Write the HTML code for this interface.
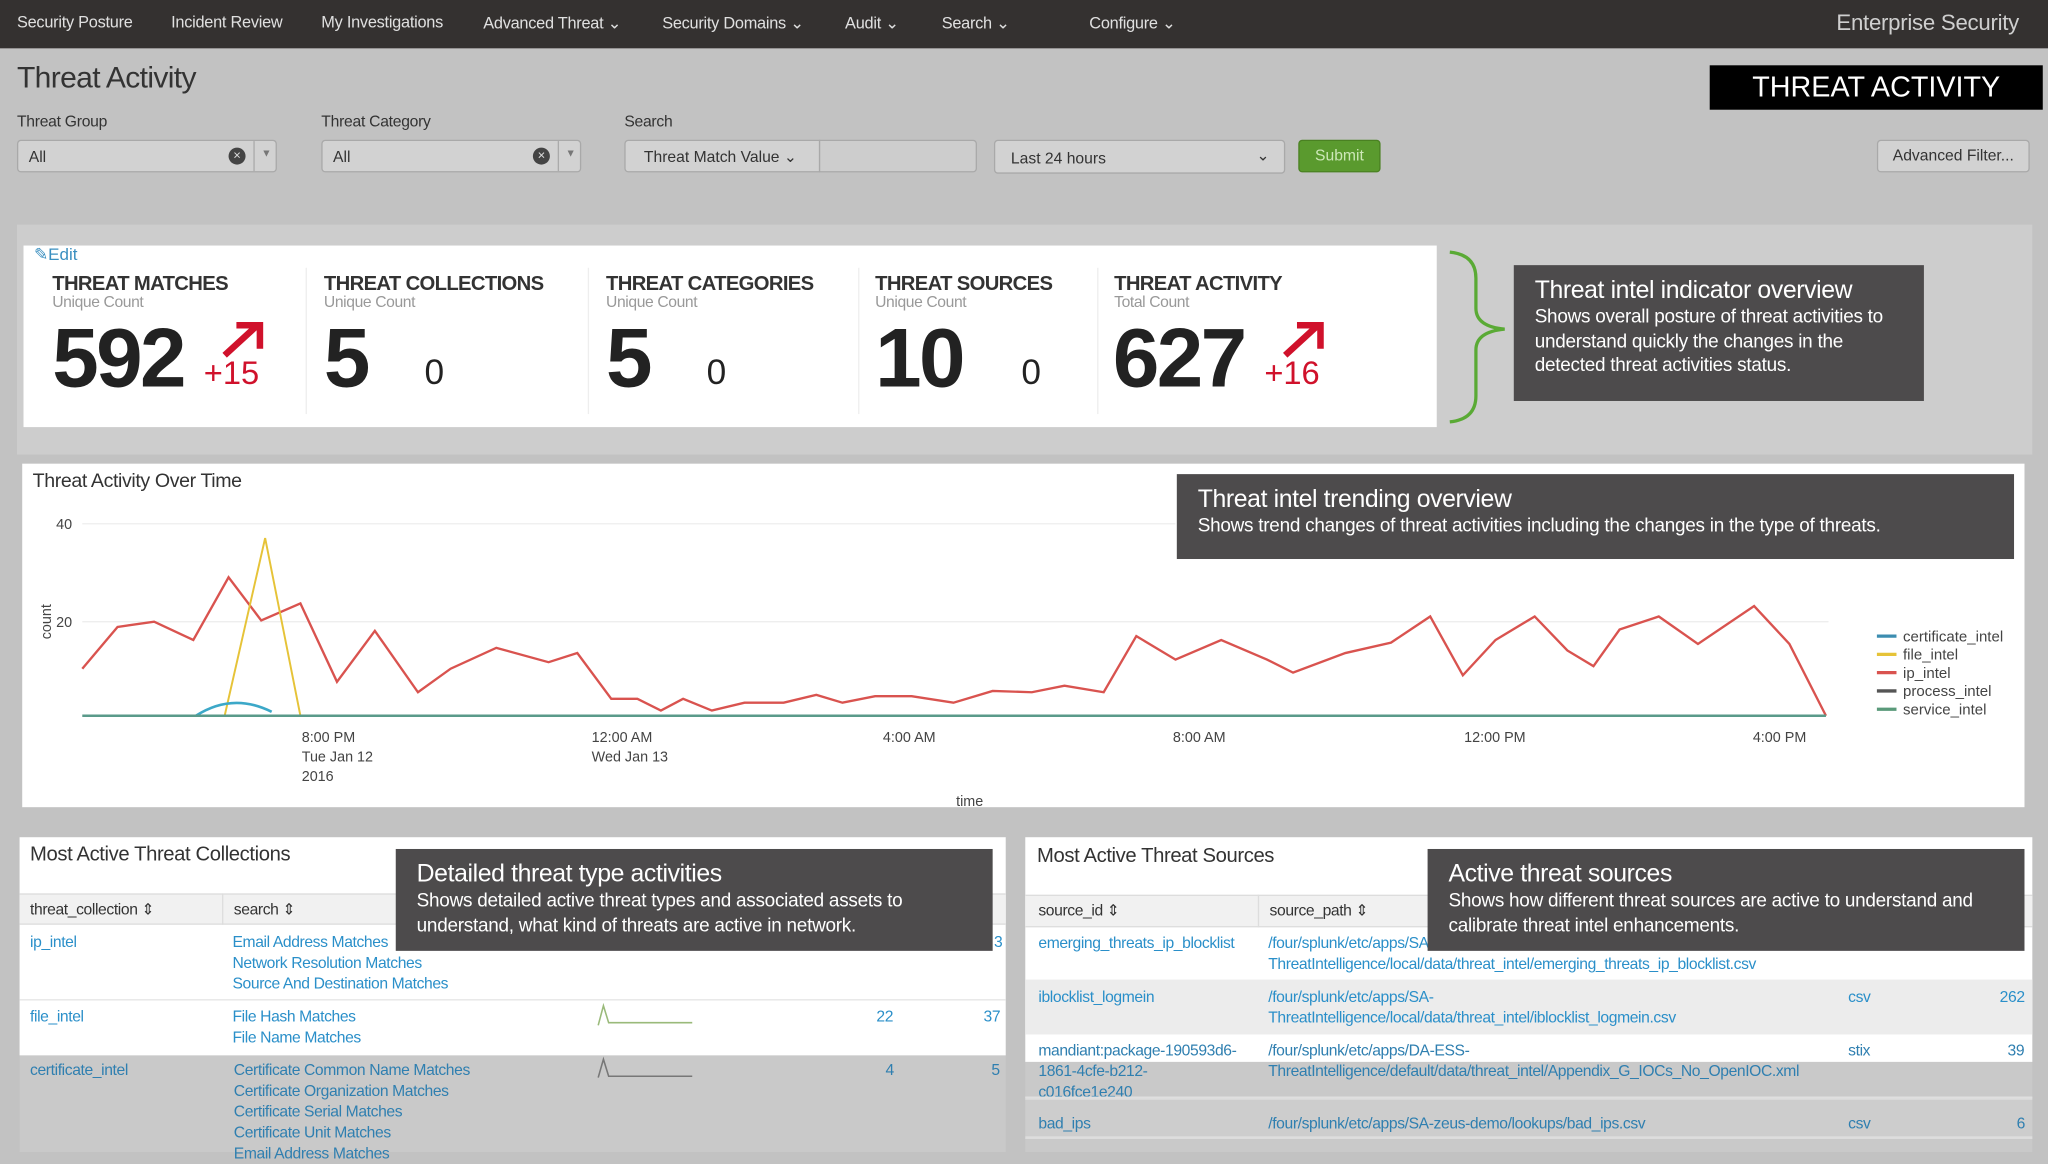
<!DOCTYPE html>
<html><head><meta charset="utf-8"><style>
*{margin:0;padding:0;box-sizing:border-box}
html,body{width:2048px;height:1152px;overflow:hidden;background:#c2c2c2}
#w{position:absolute;left:0;top:0;width:1568px;height:882px;transform:scale(1.30612);transform-origin:0 0;font-family:"Liberation Sans",sans-serif;background:#c2c2c2;color:#333}
.a{position:absolute}
.nav{left:0;top:0;width:1568px;height:37px;background:#343130}
.nav span{position:absolute;top:10px;font-size:12.5px;color:#e0e0e0;letter-spacing:-.2px}
.lbl{font-size:12px;color:#333;letter-spacing:-.2px}
.inp{background:#d2d2d2;border:1px solid #a9a9a9;border-radius:3px;font-size:12px;color:#333}
.card{background:#fff}
.t{font-size:15.5px;font-weight:bold;color:#333;letter-spacing:-.5px}
.u{font-size:12px;color:#999;letter-spacing:-.3px}
.big{font-size:64px;font-weight:bold;color:#222;letter-spacing:-2px}
.sm{font-size:27px;color:#222}
.red{font-size:25px;color:#d0112b}
.co{background:#4d4b4c;color:#fff;z-index:2}
.co h{display:block;font-size:19px;letter-spacing:-.3px}
.co p{font-size:14.5px;line-height:18.5px;letter-spacing:-.2px}
.lk{color:#2a8fc9;font-size:12px;letter-spacing:-.3px;line-height:16px}
.th{font-size:12px;color:#333;letter-spacing:-.3px}
svg.a{z-index:1}
</style></head><body><div id="w">
<div class="a nav">
<span style="left:13px">Security Posture</span>
<span style="left:131px">Incident Review</span>
<span style="left:246px">My Investigations</span>
<span style="left:370px">Advanced Threat ⌄</span>
<span style="left:507px">Security Domains ⌄</span>
<span style="left:647px">Audit ⌄</span>
<span style="left:721px">Search ⌄</span>
<span style="left:834px">Configure ⌄</span>
<span style="left:1406px;top:8px;font-size:17px;color:#cfcfcf">Enterprise Security</span>
</div>
<div class="a" style="left:13px;top:46px;font-size:23px;color:#333;letter-spacing:-.5px">Threat Activity</div>
<div class="a" style="left:1309px;top:50px;width:255px;height:34px;background:#000;color:#fff;font-size:22px;text-align:center;line-height:34px">THREAT ACTIVITY</div>

<div class="a lbl" style="left:13px;top:86px">Threat Group</div>
<div class="a lbl" style="left:246px;top:86px">Threat Category</div>
<div class="a lbl" style="left:478px;top:86px">Search</div>
<div class="a inp" style="left:13px;top:107px;width:199px;height:25px;padding:5px 8px">All<span class="a" style="left:161px;top:5px;width:13px;height:13px;border-radius:50%;background:#444;color:#ddd;font-size:10px;line-height:13px;text-align:center">×</span><span class="a" style="left:180px;top:0;width:1px;height:23px;background:#aaa"></span><span class="a" style="left:186px;top:5px;font-size:8px;color:#777">▼</span></div>
<div class="a inp" style="left:246px;top:107px;width:199px;height:25px;padding:5px 8px">All<span class="a" style="left:161px;top:5px;width:13px;height:13px;border-radius:50%;background:#444;color:#ddd;font-size:10px;line-height:13px;text-align:center">×</span><span class="a" style="left:180px;top:0;width:1px;height:23px;background:#aaa"></span><span class="a" style="left:186px;top:5px;font-size:8px;color:#777">▼</span></div>
<div class="a inp" style="left:478px;top:107px;width:150px;height:25px;padding:5px 14px;border-radius:3px 0 0 3px">Threat Match Value ⌄</div>
<div class="a inp" style="left:627px;top:107px;width:121px;height:25px;background:#cdcdcd;border-radius:0 3px 3px 0"></div>
<div class="a inp" style="left:761px;top:107px;width:223px;height:26px;padding:6px 12px">Last 24 hours<span class="a" style="left:200px;top:4px">⌄</span></div>
<div class="a" style="left:994px;top:107px;width:63px;height:25px;background:#5a9a2e;border:1px solid #4a8122;border-radius:3px;color:#cde8b8;font-size:12px;text-align:center;line-height:23px">Submit</div>
<div class="a inp" style="left:1437px;top:107px;width:117px;height:25px;text-align:center;line-height:23px">Advanced Filter...</div>

<div class="a" style="left:13px;top:172px;width:1543px;height:176px;background:#cdcdcd"></div>
<div class="a card" style="left:18px;top:188px;width:1082px;height:139px"></div>
<div class="a" style="left:26px;top:187px;font-size:13px;color:#3a8fc0">✎Edit</div>
<div class="a" style="left:234px;top:205px;width:1px;height:112px;background:#eee"></div>
<div class="a" style="left:450px;top:205px;width:1px;height:112px;background:#eee"></div>
<div class="a" style="left:657px;top:205px;width:1px;height:112px;background:#eee"></div>
<div class="a" style="left:840px;top:205px;width:1px;height:112px;background:#eee"></div>

<div class="a t" style="left:40px;top:209px">THREAT MATCHES</div><div class="a u" style="left:40px;top:224px">Unique Count</div>
<div class="a big" style="left:40px;top:237px">592</div>
<div class="a t" style="left:248px;top:209px">THREAT COLLECTIONS</div><div class="a u" style="left:248px;top:224px">Unique Count</div>
<div class="a big" style="left:248px;top:237px">5</div><div class="a sm" style="left:325px;top:270px">0</div>
<div class="a t" style="left:464px;top:209px">THREAT CATEGORIES</div><div class="a u" style="left:464px;top:224px">Unique Count</div>
<div class="a big" style="left:464px;top:237px">5</div><div class="a sm" style="left:541px;top:270px">0</div>
<div class="a t" style="left:670px;top:209px">THREAT SOURCES</div><div class="a u" style="left:670px;top:224px">Unique Count</div>
<div class="a big" style="left:670px;top:237px">10</div><div class="a sm" style="left:782px;top:270px">0</div>
<div class="a t" style="left:853px;top:209px">THREAT ACTIVITY</div><div class="a u" style="left:853px;top:224px">Total Count</div>
<div class="a big" style="left:852px;top:237px">627</div>
<div class="a red" style="left:156px;top:272px">+15</div>
<div class="a red" style="left:968px;top:272px">+16</div>

<div class="a co" style="left:1159px;top:203px;width:314px;height:104px;padding:9px 16px"><h>Threat intel indicator overview</h><p>Shows overall posture of threat activities to understand quickly the changes in the detected threat activities status.</p></div>

<div class="a card" style="left:17px;top:355px;width:1533px;height:263px"></div>
<div class="a" style="left:25px;top:360px;font-size:15px;color:#333;letter-spacing:-.3px">Threat Activity Over Time</div>
<div class="a co" style="left:901px;top:363px;width:641px;height:65px;padding:9px 16px"><h>Threat intel trending overview</h><p>Shows trend changes of threat activities including the changes in the type of threats.</p></div>

<div class="a" style="left:15px;top:641px;width:755px;height:241px;background:#c9c9c9"></div>
<div class="a card" style="left:15px;top:641px;width:755px;height:167px"></div>
<div class="a" style="left:23px;top:646px;font-size:15.5px;color:#333;letter-spacing:-.3px">Most Active Threat Collections</div>
<div class="a" style="left:15px;top:684px;width:755px;height:24px;background:#f1f1f1;border-top:1px solid #ddd;border-bottom:1px solid #ddd"></div>
<div class="a" style="left:170px;top:684px;width:1px;height:24px;background:#ddd"></div>
<div class="a th" style="left:23px;top:689px">threat_collection ⇕</div>
<div class="a th" style="left:179px;top:689px">search ⇕</div>
<div class="a lk" style="left:23px;top:713px">ip_intel</div>
<div class="a lk" style="left:178px;top:713px">Email Address Matches<br>Network Resolution Matches<br>Source And Destination Matches</div>
<div class="a" style="left:15px;top:765px;width:755px;height:1px;background:#e4e4e4"></div>
<div class="a lk" style="left:23px;top:770px">file_intel</div>
<div class="a lk" style="left:178px;top:770px">File Hash Matches<br>File Name Matches</div>
<div class="a lk" style="left:671px;top:770px">22</div><div class="a lk" style="left:753px;top:770px">37</div>
<div class="a lk" style="left:23px;top:811px;color:#2f7fb0">certificate_intel</div>
<div class="a lk" style="left:179px;top:811px;color:#2f7fb0">Certificate Common Name Matches<br>Certificate Organization Matches<br>Certificate Serial Matches<br>Certificate Unit Matches<br>Email Address Matches</div>
<div class="a lk" style="left:678px;top:811px;color:#2f7fb0">4</div><div class="a lk" style="left:759px;top:811px;color:#2f7fb0">5</div>
<div class="a lk" style="left:761px;top:713px">3</div>

<div class="a" style="left:785px;top:641px;width:771px;height:241px;background:#c9c9c9"></div>
<div class="a card" style="left:785px;top:641px;width:771px;height:172px"></div>
<div class="a" style="left:785px;top:750px;width:771px;height:42px;background:#ececec"></div>
<div class="a" style="left:785px;top:840px;width:771px;height:32px;background:#cdcdcd;border-top:2px solid #ddd;border-bottom:2px solid #ddd"></div>
<div class="a" style="left:794px;top:647px;font-size:15.5px;color:#333;letter-spacing:-.3px">Most Active Threat Sources</div>
<div class="a" style="left:785px;top:685px;width:771px;height:25px;background:#f1f1f1;border-top:1px solid #ddd;border-bottom:1px solid #ddd"></div>
<div class="a" style="left:963px;top:685px;width:1px;height:25px;background:#ddd"></div>
<div class="a th" style="left:795px;top:690px">source_id ⇕</div>
<div class="a th" style="left:972px;top:690px">source_path ⇕</div>
<div class="a lk" style="left:795px;top:714px">emerging_threats_ip_blocklist</div>
<div class="a lk" style="left:971px;top:714px">/four/splunk/etc/apps/SA-<br>ThreatIntelligence/local/data/threat_intel/emerging_threats_ip_blocklist.csv</div>
<div class="a lk" style="left:795px;top:755px">iblocklist_logmein</div>
<div class="a lk" style="left:971px;top:755px">/four/splunk/etc/apps/SA-<br>ThreatIntelligence/local/data/threat_intel/iblocklist_logmein.csv</div>
<div class="a lk" style="left:1415px;top:755px">csv</div><div class="a lk" style="left:1531px;top:755px">262</div>
<div class="a lk" style="left:795px;top:796px;color:#2f7fb0">mandiant:package-190593d6-<br>1861-4cfe-b212-<br>c016fce1e240</div>
<div class="a lk" style="left:971px;top:796px;color:#2f7fb0">/four/splunk/etc/apps/DA-ESS-<br>ThreatIntelligence/default/data/threat_intel/Appendix_G_IOCs_No_OpenIOC.xml</div>
<div class="a lk" style="left:1415px;top:796px;color:#2f7fb0">stix</div><div class="a lk" style="left:1537px;top:796px;color:#2f7fb0">39</div>
<div class="a lk" style="left:795px;top:852px;color:#2f7fb0">bad_ips</div>
<div class="a lk" style="left:971px;top:852px;color:#2f7fb0">/four/splunk/etc/apps/SA-zeus-demo/lookups/bad_ips.csv</div>
<div class="a lk" style="left:1415px;top:852px;color:#2f7fb0">csv</div><div class="a lk" style="left:1544px;top:852px;color:#2f7fb0">6</div>

<div class="a co" style="left:303px;top:650px;width:457px;height:78px;padding:9px 16px"><h>Detailed threat type activities</h><p>Shows detailed active threat types and associated assets to understand, what kind of threats are active in network.</p></div>
<div class="a co" style="left:1093px;top:650px;width:457px;height:78px;padding:9px 16px"><h>Active threat sources</h><p>Shows how different threat sources are active to understand and calibrate threat intel enhancements.</p></div>

<svg class="a" style="left:0;top:0" width="1568" height="882" viewBox="0 0 1568 882">
<path d="M1110 193 Q1130 195 1130 213 L1130 236 Q1130 250 1152 252 Q1130 254 1130 268 L1130 303 Q1130 321 1110 323" fill="none" stroke="#5aaa35" stroke-width="2.5"/>
<path d="M172 272 L196 250 M181 249 L199 249 L199 267" fill="none" stroke="#d0112b" stroke-width="5"/>
<path d="M984 272 L1008 250 M993 249 L1011 249 L1011 267" fill="none" stroke="#d0112b" stroke-width="5"/>
<g font-family="Liberation Sans" font-size="11" fill="#444">
<line x1="63" y1="401" x2="900" y2="401" stroke="#eee"/><line x1="63" y1="476" x2="1400" y2="476" stroke="#eee"/>
<text x="43" y="405">40</text><text x="43" y="480">20</text>
<text x="39" y="476" transform="rotate(-90 39 476)" text-anchor="middle">count</text>
<text x="231" y="568">8:00 PM</text><text x="231" y="583">Tue Jan 12</text><text x="231" y="598">2016</text>
<text x="453" y="568">12:00 AM</text><text x="453" y="583">Wed Jan 13</text>
<text x="676" y="568">4:00 AM</text><text x="898" y="568">8:00 AM</text><text x="1121" y="568">12:00 PM</text><text x="1342" y="568">4:00 PM</text>
<text x="732" y="617">time</text>
<g font-size="11.5"><text x="1457" y="491">certificate_intel</text><text x="1457" y="505">file_intel</text><text x="1457" y="519">ip_intel</text><text x="1457" y="533">process_intel</text><text x="1457" y="547">service_intel</text></g>
</g>
<g stroke-width="2.5"><line x1="1437" y1="487" x2="1452" y2="487" stroke="#3c8db0"/><line x1="1437" y1="501" x2="1452" y2="501" stroke="#e6c338"/><line x1="1437" y1="515" x2="1452" y2="515" stroke="#d9534f"/><line x1="1437" y1="529" x2="1452" y2="529" stroke="#555"/><line x1="1437" y1="543" x2="1452" y2="543" stroke="#5a9a7a"/></g>
<polyline fill="none" stroke="#d9534f" stroke-width="1.8" points="63,512 90,480 118,476 148,490 175,442 200,475 230,462 258,522 287,483 320,530 345,512 380,496 420,507 442,500 468,535 488,535 506,544 523,535 545,544 570,538 600,538 625,532 645,538 670,533 698,533 730,538 760,529 790,530 815,525 845,530 870,487 900,505 935,490 970,505 990,515 1030,500 1065,492 1095,472 1120,517 1145,490 1175,472 1200,498 1220,510 1240,482 1270,472 1300,493 1343,464 1370,493 1398,548"/>
<polyline fill="none" stroke="#e6c338" stroke-width="1.5" points="172,548 203,412 230,548"/>
<path d="M150 548 Q178 530 208 545" fill="none" stroke="#3ca8c8" stroke-width="2"/>
<line x1="63" y1="548" x2="1398" y2="548" stroke="#5a9a8a" stroke-width="2"/>
<path d="M458 785 L462 770 L466 783 L530 783" fill="none" stroke="#9aba7a" stroke-width="1.2"/>
<path d="M458 825 L462 811 L466 824 L530 824" fill="none" stroke="#777" stroke-width="1.2"/>
<line x1="785" y1="840" x2="1556" y2="840" stroke="#e0e0e0"/>
</svg>
</div></body></html>
